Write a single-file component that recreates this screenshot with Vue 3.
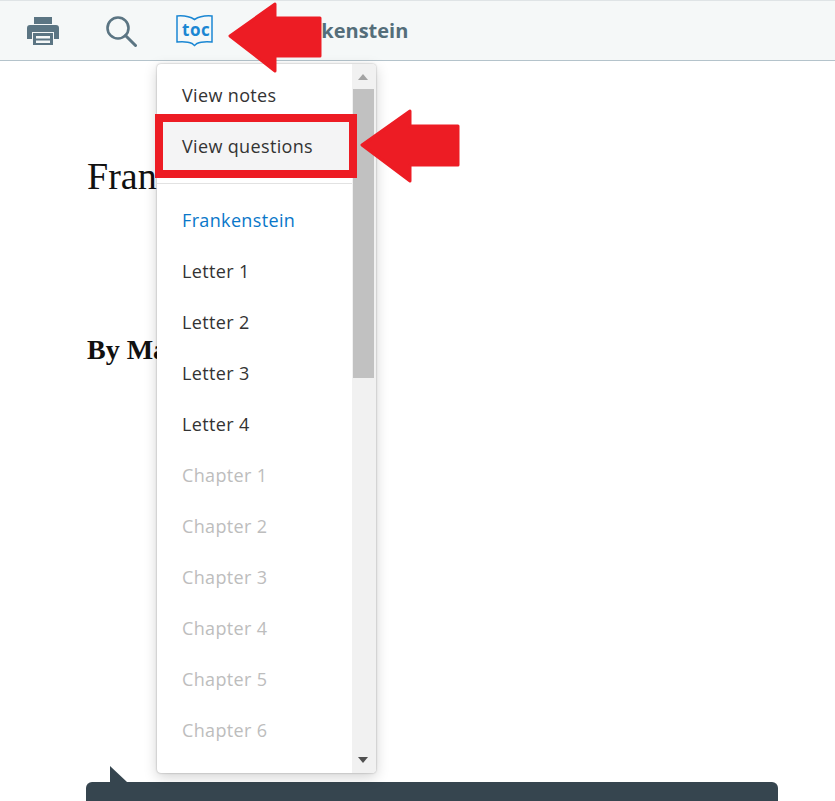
<script setup>
const chapters = ['Letter 1', 'Letter 2', 'Letter 3', 'Letter 4']
const muted = ['Chapter 1', 'Chapter 2', 'Chapter 3', 'Chapter 4', 'Chapter 5', 'Chapter 6']
</script>

<template>
  <div class="page">
    <header class="toolbar">
      <svg class="icon print" viewBox="0 0 32 30" width="32" height="30">
        <path fill="#5b7583" d="M7 1h18v7H7zM3 9h26a3 3 0 0 1 3 3v11h-5v-7H5v7H0V12a3 3 0 0 1 3-3z" />
        <path fill="#5b7583" fill-rule="evenodd" d="M6 17h20v12H6zM9 20v2.500h14V20zM9 24.500V27h14v-2.500z" />
      </svg>
      <svg class="icon search" viewBox="0 0 32 32" width="32" height="32">
        <circle cx="13" cy="13" r="10.500" fill="none" stroke="#5b7583" stroke-width="2.600" />
        <path d="M20.500 20.500 30.500 30.500" stroke="#5b7583" stroke-width="3" stroke-linecap="round" />
      </svg>
      <div class="toc">
        <svg viewBox="0 0 37 33" width="37" height="33">
          <path fill="none" stroke="#1b87d3" stroke-width="1.500" d="M1 2c6-.5 12 0 17.500 3.500C24 2 30 1.500 36 2v26c-6-.5-12 0-15 1.500l-2.500 2-2.500-2C13 28 7 27.500 1 28z" />
        </svg>
        <span class="toc-label">toc</span>
      </div>
      <h1 class="book">Frankenstein</h1>
    </header>

    <main class="content">
      <h2 class="title">Frankenstein</h2>
      <h3 class="author">By Mary Shelley</h3>
    </main>

    <div class="bottom-bar"><span class="notch"></span></div>

    <nav class="menu">
      <div class="menu-list">
        <a class="item first">View notes</a>
        <a class="item hover">View questions</a>
        <div class="divider"></div>
        <a class="item active">Frankenstein</a>
        <a v-for="c in chapters" :key="c" class="item">{{ c }}</a>
        <a v-for="c in muted" :key="c" class="item disabled">{{ c }}</a>
      </div>
      <div class="scrollbar">
        <span class="up"></span>
        <span class="thumb"></span>
        <span class="down"></span>
      </div>
    </nav>

    <div class="highlight"></div>
    <svg class="arrow arrow-top" viewBox="0 0 94 72" width="94" height="72">
      <path fill="#ed1c24" stroke="#ed1c24" stroke-width="3" stroke-linejoin="round" d="M2 35 47 3v14h45v38H47v15z" />
    </svg>
    <svg class="arrow arrow-side" viewBox="0 0 100 74" width="100" height="74">
      <path fill="#ed1c24" stroke="#ed1c24" stroke-width="3" stroke-linejoin="round" d="M2 36 50 2v15h48v39H50v16z" />
    </svg>
  </div>
</template>

<style>
html, body { margin: 0; background: #fff; }
</style>

<style scoped>
.page {
  position: relative;
  width: 835px;
  height: 801px;
  overflow: hidden;
  font-family: "Open Sans", Lato, sans-serif;
  background: #fff;
}
.toolbar {
  box-sizing: border-box;
  height: 61px;
  display: flex;
  align-items: center;
  padding: 0 0 0 27px;
  background: #f5f8f8;
  border-top: 1px solid #dfe4e6;
  border-bottom: 1px solid #b4c3cb;
}
.icon { flex: none; }
.print { margin-top: 1px; }
.search { margin-left: 46px; }
.toc { position: relative; width: 37px; height: 33px; margin-left: 39px; margin-top: -1px; }
.toc svg { display: block; }
.toc-label {
  position: absolute;
  left: 6px;
  top: 5px;
  font: 700 17px/22px "Open Sans", sans-serif;
  letter-spacing: .5px;
  color: #1b87d3;
}
.book {
  margin: 0 0 0 63px;
  font: 700 20px/30px "Open Sans", sans-serif;
  color: #546e7a;
}
.content { padding: 90px 0 0 87px; }
.title {
  margin: 0;
  font: 400 38px/50px "Liberation Serif", serif;
  color: #111;
}
.author {
  margin: 131px 0 0;
  font: 700 28px/36px "Liberation Serif", serif;
  color: #111;
}
.bottom-bar {
  position: absolute;
  left: 86px;
  top: 782px;
  width: 692px;
  height: 30px;
  background: #36454f;
  border-radius: 6px 6px 0 0;
}
.notch {
  position: absolute;
  left: 24px;
  top: -16px;
  width: 0;
  height: 0;
  border-bottom: 16px solid #36454f;
  border-right: 17px solid transparent;
}
.menu {
  position: absolute;
  left: 157px;
  top: 64px;
  width: 219px;
  height: 709px;
  display: flex;
  background: #fff;
  border-radius: 4px;
  box-shadow: 0 0 2px rgba(0, 0, 0, .35), 0 4px 14px rgba(0, 0, 0, .18);
  overflow: hidden;
}
.menu-list { flex: 1; min-width: 0; overflow: hidden; padding-top: 6px; }
.item {
  display: block;
  height: 51px;
  padding-left: 25px;
  font-size: 18px;
  letter-spacing: .35px;
  line-height: 51px;
  color: #333;
  white-space: nowrap;
}
.hover { background: #f4f4f5; }
.divider { height: 1px; margin: 11px 0; background: #e2e2e2; }
.active { color: #0a77c9; }
.disabled { color: #bdbdbd; }
.scrollbar {
  position: relative;
  flex: none;
  width: 24px;
  background: #f1f1f1;
}
.thumb {
  position: absolute;
  left: 1px;
  top: 25px;
  width: 21px;
  height: 289px;
  background: #c1c1c1;
}
.up, .down {
  position: absolute;
  left: 6px;
  width: 0;
  height: 0;
  border-left: 5.500px solid transparent;
  border-right: 5.500px solid transparent;
}
.up { top: 10px; border-bottom: 6px solid #a3a3a3; }
.down { bottom: 10px; border-top: 6px solid #505050; }
.highlight {
  position: absolute;
  left: 155px;
  top: 114px;
  width: 202px;
  height: 64px;
  box-sizing: border-box;
  border: 8px solid #ed1c24;
}
.arrow { position: absolute; }
.arrow-top { left: 228px; top: 1px; }
.arrow-side { left: 360px; top: 109px; }
</style>
